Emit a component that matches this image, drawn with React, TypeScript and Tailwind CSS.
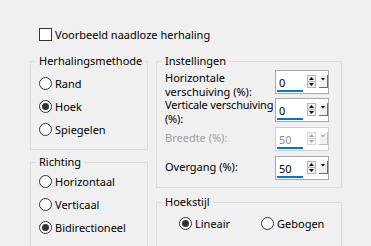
import React from "react";

function Radio({ checked, label }: { checked?: boolean; label: string }) {
  return (
    <div className="flex items-center h-[23px]">
      <span className="w-[13px] h-[13px] rounded-full border border-[#333] bg-white flex items-center justify-center shrink-0">
        {checked && <span className="w-[7px] h-[7px] rounded-full bg-[#333]" />}
      </span>
      <span className="ml-[3px] leading-[16px]">{label}</span>
    </div>
  );
}

function Spinner({ value, disabled }: { value: string; disabled?: boolean }) {
  const tri = disabled ? "#a8a8a8" : "#000";
  return (
    <div
      className={
        "w-[54px] h-[24px] bg-white border flex items-start pt-[3px] pl-[1px] shrink-0 " +
        (disabled ? "border-[#cfcfcf]" : "border-[#a8a8a8]")
      }
    >
      <div
        className={
          "w-[26px] h-[18px] border-b-2 border-[#0078d7] pl-[2px] leading-[17px] " +
          (disabled ? "text-[#8d8d8d]" : "text-black")
        }
      >
        {value}
      </div>
      <svg width="21" height="14" viewBox="0 0 21 14" className="ml-[4px] mt-[1px]">
        <rect x="0.5" y="0.5" width="8" height="6" fill="#f4f4f4" stroke={disabled ? "#d6d6d6" : "#b4b4b4"} />
        <rect x="0.5" y="6.5" width="8" height="6" fill="#f4f4f4" stroke={disabled ? "#d6d6d6" : "#b4b4b4"} />
        <polygon points="2,5 7,5 4.5,2" fill={tri} />
        <polygon points="2,8 7,8 4.5,11" fill={tri} />
        <rect x="12" y="0" width="9" height="13" fill="#f0f0f0" />
        <line x1="12.5" y1="0" x2="12.5" y2="13" stroke="#ffffff" />
        <line x1="12" y1="0.5" x2="21" y2="0.5" stroke="#ffffff" />
        <line x1="20.5" y1="0" x2="20.5" y2="13" stroke={disabled ? "#bdbdbd" : "#6d6d6d"} />
        <line x1="12" y1="12.5" x2="21" y2="12.5" stroke={disabled ? "#bdbdbd" : "#6d6d6d"} />
        <polygon points="14,3 18,3 16,5.5" fill={tri} />
      </svg>
    </div>
  );
}

function Group({ title, children }: { title: string; children: React.ReactNode }) {
  return (
    <fieldset className="border border-[#dcdcdc]">
      <legend className="ml-[5px] px-[3px] leading-[16px]">{title}</legend>
      {children}
    </fieldset>
  );
}

export default function App() {
  return (
    <div className="w-[371px] h-[246px] bg-[#f0f0f0] overflow-hidden text-[11px] text-black font-['Noto_Sans','Open_Sans',sans-serif]">
      <div className="flex items-center pl-[39px] pt-[28px] h-[41px]">
        <span className="w-[13px] h-[13px] border border-[#333] bg-white shrink-0" />
        <span className="ml-[3px] leading-[16px]">Voorbeeld naadloze herhaling</span>
      </div>

      <div className="flex gap-[8px] pl-[30px] mt-[12px]">
        {/* linker kolom */}
        <div className="w-[118px] flex flex-col gap-[4px] shrink-0">
          <Group title="Herhalingsmethode">
            <div className="pl-[8px] pt-[3px] pb-[8px]">
              <Radio label="Rand" />
              <Radio label="Hoek" checked />
              <Radio label="Spiegelen" />
            </div>
          </Group>
          <Group title="Richting">
            <div className="pl-[8px] pb-[14px]">
              <Radio label="Horizontaal" />
              <Radio label="Verticaal" />
              <Radio label="Bidirectioneel" checked />
            </div>
          </Group>
        </div>

        {/* rechter kolom */}
        <div className="w-[186px] flex flex-col gap-[6px] shrink-0">
          <Group title="Instellingen">
            <div className="pl-[8px] pt-[1px] pb-[7px]">
              <div className="flex items-start h-[28px]">
                <div className="w-[110px] leading-[13.5px] pt-[1px]">
                  Horizontale
                  <br />
                  verschuiving (%):
                </div>
                <Spinner value="0" />
              </div>
              <div className="flex items-start h-[29px]">
                <div className="w-[110px] leading-[13.5px] whitespace-nowrap tracking-[-0.2px]">
                  Verticale verschuiving
                  <br />
                  (%):
                </div>
                <Spinner value="0" />
              </div>
              <div className="flex items-start h-[29px]">
                <div className="w-[110px] leading-[13.5px] pt-[4px] text-[#a0a0a0]">Breedte (%):</div>
                <Spinner value="50" disabled />
              </div>
              <div className="flex items-start h-[24px]">
                <div className="w-[110px] leading-[13.5px] pt-[4px]">Overgang (%):</div>
                <Spinner value="50" />
              </div>
            </div>
          </Group>
          <Group title="Hoekstijl">
            <div className="flex pl-[22px] pt-[2px] pb-[16px]">
              <div className="w-[82px]">
                <Radio label="Lineair" checked />
              </div>
              <Radio label="Gebogen" />
            </div>
          </Group>
        </div>
      </div>
    </div>
  );
}
